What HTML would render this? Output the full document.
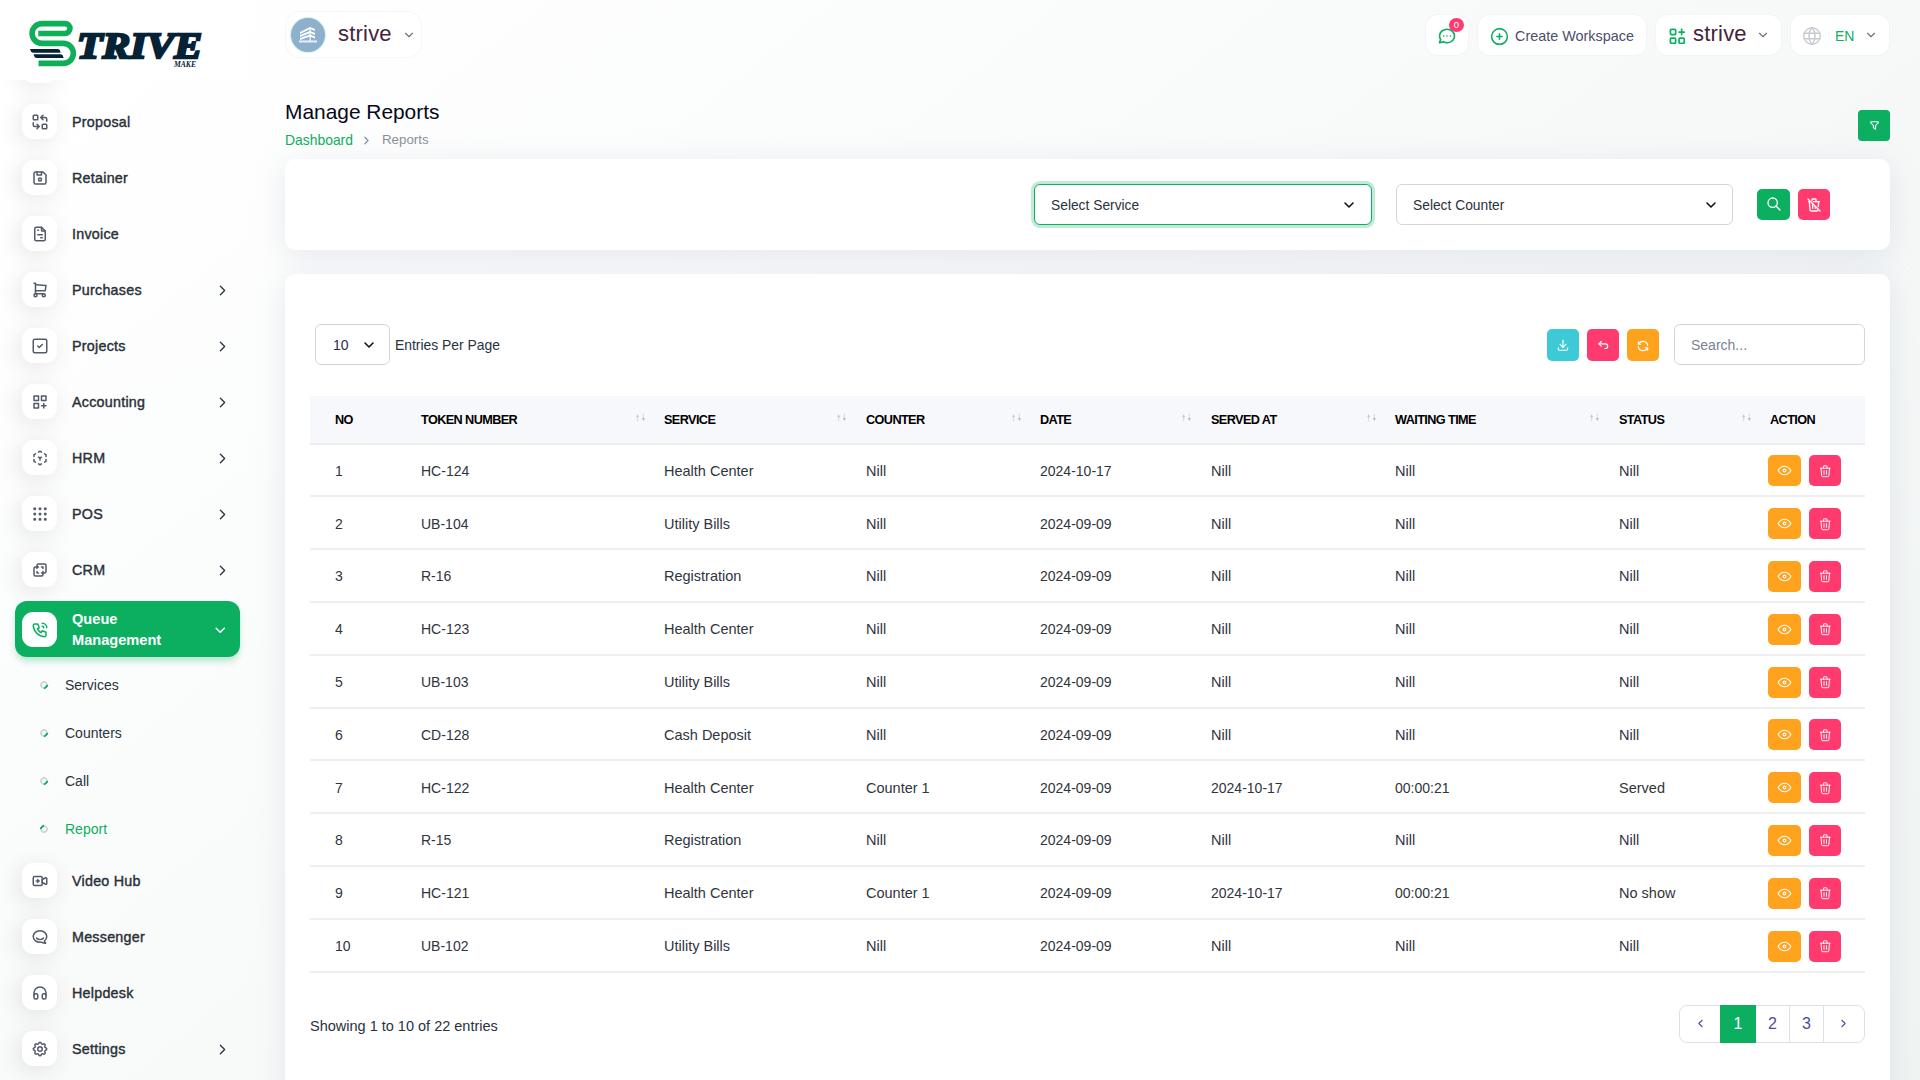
<!DOCTYPE html>
<html><head><meta charset="utf-8">
<style>
*{box-sizing:border-box;margin:0;padding:0}
html,body{width:1920px;height:1080px;overflow:hidden}
body{font-family:"Liberation Sans",sans-serif;color:#293240;position:relative;
background:linear-gradient(141.55deg,#ffffff 3.46%,#f0f4f3 99.86%);}
.abs{position:absolute}
svg.ti{fill:none;stroke:currentColor;stroke-linecap:round;stroke-linejoin:round}
/* sidebar */
#side{position:absolute;left:0;top:0;width:282px;height:1080px;
background:transparent;}
#logoband{position:absolute;left:0;top:0;width:282px;height:80px;background:linear-gradient(90deg,#fff 80%,rgba(255,255,255,0))}
.mi{position:absolute;left:15px;width:225px;height:56px}
.mi .ib{position:absolute;left:7px;top:10.5px;width:35px;height:35px;border-radius:11px;background:#fff;
box-shadow:-3px 4px 23px rgba(0,0,0,0.1);color:#525b69}
.mi .ib svg{position:absolute;left:8.5px;top:9.2px;width:18px;height:18px;stroke-width:2}
.mi .tx{position:absolute;left:57px;top:0;line-height:56px;font-size:14.3px;font-weight:normal;color:#2a3038;-webkit-text-stroke:0.4px #2a3038;letter-spacing:0.25px}
.mi .chev{position:absolute;left:198.5px;top:20.5px;width:17px;height:17px;color:#293240}
.mi.active{background:#0caf60;border-radius:12px;box-shadow:0 5px 7px -1px rgba(12,175,96,0.3)}
.mi.active .ib{box-shadow:none;color:#0caf60}
.mi.active .tx{color:#fff;line-height:21px;top:7.5px;font-size:14.6px;letter-spacing:0;font-weight:bold;-webkit-text-stroke:0}
.sub{position:absolute;left:65px;font-size:14px;color:#293240;line-height:20px}
.ring{position:absolute;left:40px;width:8px;height:8px;border-radius:50%;border:2px solid #d3d6df;transform:rotate(-45deg)}
/* top */
.tbox{position:absolute;top:15px;height:40px;background:#fff;border-radius:12px;box-shadow:0 0 0 1px rgba(240,240,243,0.6)}
/* cards */
.card{position:absolute;background:#fff;border-radius:10px;box-shadow:0 6px 30px rgba(182,186,203,0.3)}
.btn{position:absolute;border-radius:5px;color:#fff}
.btn svg{position:absolute;stroke-width:2}
.sel{position:absolute;height:41px;border:1px solid #d1d5dc;border-radius:6px;background:#fff;font-size:14px;color:#293240}
/* table */
.th{position:absolute;top:396px;font-size:12.7px;font-weight:bold;color:#000;line-height:48px;letter-spacing:-0.6px}
.srt{position:absolute;width:11px;height:9px}
.row{position:absolute;left:310px;width:1555px;border-bottom:2px solid #efefef}
.td{position:absolute;font-size:14.5px;color:#2f353d;top:0}
.ab{position:absolute;width:33px;height:31px;border-radius:5px}
</style></head><body>

<!-- SIDEBAR -->
<div id="side"></div>
<div class="mi" style="top:37.5px"><div class="ib"></div></div>
<div class="mi" style="top:93.5px"><div class="ib"><svg class="ti" viewBox="0 0 24 24" ><path d="M3 3m0 1a1 1 0 0 1 1 -1h4a1 1 0 0 1 1 1v4a1 1 0 0 1 -1 1h-4a1 1 0 0 1 -1 -1z"/><path d="M15 15m0 1a1 1 0 0 1 1 -1h4a1 1 0 0 1 1 1v4a1 1 0 0 1 -1 1h-4a1 1 0 0 1 -1 -1z"/><path d="M21 11v-3a2 2 0 0 0 -2 -2h-6l3 3m0 -6l-3 3"/><path d="M3 13v3a2 2 0 0 0 2 2h6l-3 -3m0 6l3 -3"/></svg></div><div class="tx">Proposal</div></div>
<div class="mi" style="top:149.5px"><div class="ib"><svg class="ti" viewBox="0 0 24 24" ><path d="M6 4h10l4 4v10a2 2 0 0 1 -2 2h-12a2 2 0 0 1 -2 -2v-12a2 2 0 0 1 2 -2"/><path d="M12 14m-2 0a2 2 0 1 0 4 0a2 2 0 1 0 -4 0"/><path d="M14 4l0 4l-6 0l0 -4"/></svg></div><div class="tx">Retainer</div></div>
<div class="mi" style="top:205.5px"><div class="ib"><svg class="ti" viewBox="0 0 24 24" ><path d="M14 3v4a1 1 0 0 0 1 1h4"/><path d="M17 21h-10a2 2 0 0 1 -2 -2v-14a2 2 0 0 1 2 -2h7l5 5v11a2 2 0 0 1 -2 2z"/><path d="M9 7l1 0"/><path d="M9 13l6 0"/><path d="M13 17l2 0"/></svg></div><div class="tx">Invoice</div></div>
<div class="mi" style="top:261.5px"><div class="ib"><svg class="ti" viewBox="0 0 24 24" ><path d="M6 19m-2 0a2 2 0 1 0 4 0a2 2 0 1 0 -4 0"/><path d="M17 19m-2 0a2 2 0 1 0 4 0a2 2 0 1 0 -4 0"/><path d="M17 17h-11v-14h-2"/><path d="M6 5l14 1l-1 7h-13"/></svg></div><div class="tx">Purchases</div><svg class="chev ti" viewBox="0 0 24 24" stroke-width="1.8"><path d="M9 6l6 6l-6 6"/></svg></div>
<div class="mi" style="top:317.5px"><div class="ib"><svg class="ti" viewBox="0 0 24 24" ><path d="M3 5a2 2 0 0 1 2 -2h14a2 2 0 0 1 2 2v14a2 2 0 0 1 -2 2h-14a2 2 0 0 1 -2 -2v-14z"/><path d="M9 12l2 2l4 -4"/></svg></div><div class="tx">Projects</div><svg class="chev ti" viewBox="0 0 24 24" stroke-width="1.8"><path d="M9 6l6 6l-6 6"/></svg></div>
<div class="mi" style="top:373.5px"><div class="ib"><svg class="ti" viewBox="0 0 24 24" ><path d="M4 4h6v6h-6z"/><path d="M14 4h6v6h-6z"/><path d="M4 14h6v6h-6z"/><path d="M14 17h6m-3 -3v6"/></svg></div><div class="tx">Accounting</div><svg class="chev ti" viewBox="0 0 24 24" stroke-width="1.8"><path d="M9 6l6 6l-6 6"/></svg></div>
<div class="mi" style="top:429.5px"><div class="ib"><svg class="ti" viewBox="0 0 24 24" ><path d="M6 17.6l-2 -1.1v-2.5"/><path d="M4 10v-2.5l2 -1.1"/><path d="M10 4.1l2 -1.1l2 1.1"/><path d="M18 6.4l2 1.1v2.5"/><path d="M20 14v2.5l-2 1.12"/><path d="M14 19.9l-2 1.1l-2 -1.1"/><path d="M12 12l2 -1.1"/><path d="M12 12l0 2.5"/><path d="M12 12l-2 -1.12"/></svg></div><div class="tx">HRM</div><svg class="chev ti" viewBox="0 0 24 24" stroke-width="1.8"><path d="M9 6l6 6l-6 6"/></svg></div>
<div class="mi" style="top:485.5px"><div class="ib"><svg class="ti" viewBox="0 0 24 24" ><path d="M5 5m-1 0a1 1 0 1 0 2 0a1 1 0 1 0 -2 0"/><path d="M12 5m-1 0a1 1 0 1 0 2 0a1 1 0 1 0 -2 0"/><path d="M19 5m-1 0a1 1 0 1 0 2 0a1 1 0 1 0 -2 0"/><path d="M5 12m-1 0a1 1 0 1 0 2 0a1 1 0 1 0 -2 0"/><path d="M12 12m-1 0a1 1 0 1 0 2 0a1 1 0 1 0 -2 0"/><path d="M19 12m-1 0a1 1 0 1 0 2 0a1 1 0 1 0 -2 0"/><path d="M5 19m-1 0a1 1 0 1 0 2 0a1 1 0 1 0 -2 0"/><path d="M12 19m-1 0a1 1 0 1 0 2 0a1 1 0 1 0 -2 0"/><path d="M19 19m-1 0a1 1 0 1 0 2 0a1 1 0 1 0 -2 0"/></svg></div><div class="tx">POS</div><svg class="chev ti" viewBox="0 0 24 24" stroke-width="1.8"><path d="M9 6l6 6l-6 6"/></svg></div>
<div class="mi" style="top:541.5px"><div class="ib"><svg class="ti" viewBox="0 0 24 24" ><path d="M16 16v2a2 2 0 0 1 -2 2h-8a2 2 0 0 1 -2 -2v-8a2 2 0 0 1 2 -2h2v-2a2 2 0 0 1 2 -2h8a2 2 0 0 1 2 2v8a2 2 0 0 1 -2 2h-2"/><path d="M10 8l-2 0l0 2"/><path d="M8 14l0 2l2 0"/><path d="M14 8l2 0l0 2"/><path d="M16 14l0 2l-2 0"/></svg></div><div class="tx">CRM</div><svg class="chev ti" viewBox="0 0 24 24" stroke-width="1.8"><path d="M9 6l6 6l-6 6"/></svg></div>
<div class="mi active" style="top:601px"><div class="ib"><svg class="ti" viewBox="0 0 24 24" ><path d="M5 4h4l2 5l-2.5 1.5a11 11 0 0 0 5 5l1.5 -2.5l5 2v4a2 2 0 0 1 -2 2a16 16 0 0 1 -15 -15a2 2 0 0 1 2 -2"/><path d="M15 7a2 2 0 0 1 2 2"/><path d="M15 3a6 6 0 0 1 6 6"/></svg></div><div class="tx">Queue<br>Management</div><svg class="chev ti" viewBox="0 0 24 24" stroke-width="2.2" style="color:#fff;left:197px;top:20.5px;width:16.5px;height:16.5px"><path d="M6 9l6 6l6 -6"/></svg></div>
<div class="ring" style="top:680.5px;border-color:#d3d6df #d3d6df #0caf60 #d3d6df"></div><div class="sub" style="top:674.5px;color:#293240">Services</div>
<div class="ring" style="top:728.5px;border-color:#d3d6df #d3d6df #0caf60 #d3d6df"></div><div class="sub" style="top:722.5px;color:#293240">Counters</div>
<div class="ring" style="top:776.5px;border-color:#d3d6df #d3d6df #0caf60 #d3d6df"></div><div class="sub" style="top:770.5px;color:#293240">Call</div>
<div class="ring" style="top:824.5px;border-color:#0caf60 #d3d6df #d3d6df #d3d6df"></div><div class="sub" style="top:818.5px;color:#0caf60">Report</div>
<div class="mi" style="top:852.5px"><div class="ib"><svg class="ti" viewBox="0 0 24 24" ><path d="M15 10l4.553 -2.276a1 1 0 0 1 1.447 .894v6.764a1 1 0 0 1 -1.447 .894l-4.553 -2.276v-4z"/><path d="M3 6m0 2a2 2 0 0 1 2 -2h8a2 2 0 0 1 2 2v8a2 2 0 0 1 -2 2h-8a2 2 0 0 1 -2 -2z"/><path d="M7 12l4 0"/><path d="M9 10l0 4"/></svg></div><div class="tx">Video Hub</div></div>
<div class="mi" style="top:908.5px"><div class="ib"><svg class="ti" viewBox="0 0 24 24" ><path d="M17.802 17.292s.077 -.055 .2 -.149c1.843 -1.425 3 -3.49 3 -5.789c0 -4.286 -4.03 -7.764 -9 -7.764c-4.97 0 -9 3.478 -9 7.764c0 4.288 4.03 7.646 9 7.646c.424 0 1.12 -.028 2.088 -.084c1.262 .82 3.104 1.493 4.716 1.493c.499 0 .734 -.41 .414 -.828c-.486 -.596 -1.156 -1.551 -1.416 -2.29z"/><path d="M7.5 13.5c2.5 2.5 6.5 2.5 9 0"/></svg></div><div class="tx">Messenger</div></div>
<div class="mi" style="top:964.5px"><div class="ib"><svg class="ti" viewBox="0 0 24 24" ><path d="M4 13m0 2a2 2 0 0 1 2 -2h1a2 2 0 0 1 2 2v3a2 2 0 0 1 -2 2h-1a2 2 0 0 1 -2 -2z"/><path d="M15 13m0 2a2 2 0 0 1 2 -2h1a2 2 0 0 1 2 2v3a2 2 0 0 1 -2 2h-1a2 2 0 0 1 -2 -2z"/><path d="M4 15v-3a8 8 0 0 1 16 0v3"/></svg></div><div class="tx">Helpdesk</div></div>
<div class="mi" style="top:1020.5px"><div class="ib"><svg class="ti" viewBox="0 0 24 24" ><path d="M10.325 4.317c.426 -1.756 2.924 -1.756 3.35 0a1.724 1.724 0 0 0 2.573 1.066c1.543 -.94 3.31 .826 2.37 2.37a1.724 1.724 0 0 0 1.065 2.572c1.756 .426 1.756 2.924 0 3.35a1.724 1.724 0 0 0 -1.066 2.573c.94 1.543 -.826 3.31 -2.37 2.37a1.724 1.724 0 0 0 -2.572 1.065c-.426 1.756 -2.924 1.756 -3.35 0a1.724 1.724 0 0 0 -2.573 -1.066c-1.543 .94 -3.31 -.826 -2.37 -2.37a1.724 1.724 0 0 0 -1.065 -2.572c-1.756 -.426 -1.756 -2.924 0 -3.35a1.724 1.724 0 0 0 1.066 -2.573c-.94 -1.543 .826 -3.31 2.37 -2.37c1 .608 2.296 .07 2.572 -1.065z"/><path d="M9 12a3 3 0 1 0 6 0a3 3 0 0 0 -6 0"/></svg></div><div class="tx">Settings</div><svg class="chev ti" viewBox="0 0 24 24" stroke-width="1.8"><path d="M9 6l6 6l-6 6"/></svg></div>
<div id="logoband"></div>
<svg class="abs" style="left:20px;top:10px" width="190" height="62" viewBox="20 10 190 62">
  <path d="M38.3,33.5 H65 A4.9,4.9 0 0 0 65,23.6 H42 A9.9,9.9 0 0 0 42,43.4 H63.3 A10,10 0 0 1 63.3,63.4 H38.5" fill="none" stroke="#0faf5a" stroke-width="5.6" stroke-linecap="butt"/>
  <path d="M30,48.9 H58 Q60.5,49.5 60.5,52.8 H33 Q30.5,52 30,48.9 Z" fill="#062236"/>
  <path d="M33.6,54.2 H61 Q63.5,55 63.5,58 H36.6 Q34,57.5 33.6,54.2 Z" fill="#062236"/>
  <text x="77" y="58.2" font-family="Liberation Serif" font-weight="bold" font-style="italic" font-size="36" textLength="125" lengthAdjust="spacingAndGlyphs" fill="#062236" stroke="#062236" stroke-width="2.3">TRIVE</text>
  <text x="174" y="67" font-family="Liberation Serif" font-weight="bold" font-style="italic" font-size="7.5" textLength="22" lengthAdjust="spacingAndGlyphs" fill="#062236">MAKE</text>
</svg>



<!-- TOP BAR -->
<div class="tbox" style="left:286px;top:12px;width:135px;height:45px;border-radius:14px"></div>
<div class="abs" style="left:291px;top:18px;width:34px;height:34px;border-radius:50%;background:#8db0cc;box-shadow:0 0 0 1px #d5f1e2"></div>
<svg class="abs" style="left:297px;top:24px" width="22" height="20" viewBox="0 0 22 20">
 <path d="M3,8 L13,3 L18,5 L18,7 L13,5 L3,10Z M3,11 L13,7 L18,9 L18,11 L13,9 L3,13Z M3,14 L13,10.5 L18,12.5 L18,14.5 L13,12.5 L3,16Z" fill="#fff"/>
 <rect x="12.5" y="4" width="1.2" height="13" fill="#fff"/>
 <rect x="2" y="16.5" width="18" height="2" fill="#fff" opacity="0.8"/>
</svg>
<div class="abs" style="left:338px;top:20px;font-size:22px;line-height:28px;color:#45243a;letter-spacing:0.2px">strive</div>
<svg class="abs ti" style="left:402px;top:28px;color:#6b7280" width="14" height="14" viewBox="0 0 24 24" stroke-width="2"><path d="M6 9l6 6l6 -6"/></svg>

<div class="tbox" style="left:1426px;width:42px"></div>
<svg class="abs ti" style="left:1437px;top:26px;color:#0caf60" width="20" height="20" viewBox="0 0 24 24" stroke-width="2"><path d="M3 20l1.3 -3.9c-2.324 -3.437 -1.426 -7.872 2.1 -10.374c3.526 -2.501 8.59 -2.296 11.845 .48c3.255 2.777 3.695 7.266 1.029 10.501c-2.666 3.235 -7.615 4.215 -11.574 2.293l-4.7 1"/><path d="M12 12l0 .01"/><path d="M8 12l0 .01"/><path d="M16 12l0 .01"/></svg>
<div class="abs" style="left:1449px;top:18px;width:15px;height:14px;border-radius:50%;background:#ff3a6e;color:#fff;font-size:9.5px;line-height:14px;text-align:center">0</div>

<div class="tbox" style="left:1478px;width:168px"></div>
<svg class="abs ti" style="left:1488.5px;top:25.5px;color:#0caf60" width="21" height="21" viewBox="0 0 24 24" stroke-width="1.8"><path d="M3 12a9 9 0 1 0 18 0a9 9 0 0 0 -18 0"/><path d="M9 12h6"/><path d="M12 9v6"/></svg>
<div class="abs" style="left:1515px;top:26px;font-size:14.4px;line-height:20px;color:#4b4f6a">Create Workspace</div>

<div class="tbox" style="left:1656px;width:125px"></div>
<svg class="abs ti" style="left:1667px;top:25.65px;color:#0caf60" width="20.7" height="20.7" viewBox="0 0 24 24" stroke-width="2"><path d="M4 4m0 1a1 1 0 0 1 1 -1h4a1 1 0 0 1 1 1v4a1 1 0 0 1 -1 1h-4a1 1 0 0 1 -1 -1z"/><path d="M4 14m0 1a1 1 0 0 1 1 -1h4a1 1 0 0 1 1 1v4a1 1 0 0 1 -1 1h-4a1 1 0 0 1 -1 -1z"/><path d="M14 14m0 1a1 1 0 0 1 1 -1h4a1 1 0 0 1 1 1v4a1 1 0 0 1 -1 1h-4a1 1 0 0 1 -1 -1z"/><path d="M14 7l6 0"/><path d="M17 4l0 6"/></svg>
<div class="abs" style="left:1693px;top:20px;font-size:22px;line-height:28px;color:#45243a;letter-spacing:0.2px">strive</div>
<svg class="abs ti" style="left:1756px;top:28px;color:#6b7280" width="14" height="14" viewBox="0 0 24 24" stroke-width="2"><path d="M6 9l6 6l6 -6"/></svg>

<div class="tbox" style="left:1791px;width:98px"></div>
<svg class="abs ti" style="left:1801px;top:25px;color:#c9ccd3" width="22" height="22" viewBox="0 0 24 24" stroke-width="1.6"><path d="M3 12a9 9 0 1 0 18 0a9 9 0 0 0 -18 0"/><path d="M3.6 9h16.8"/><path d="M3.6 15h16.8"/><path d="M11.5 3a17 17 0 0 0 0 18"/><path d="M12.5 3a17 17 0 0 1 0 18"/></svg>
<div class="abs" style="left:1835px;top:26px;font-size:14px;line-height:20px;color:#0caf60">EN</div>
<svg class="abs ti" style="left:1864px;top:28px;color:#6b7280" width="14" height="14" viewBox="0 0 24 24" stroke-width="2"><path d="M6 9l6 6l6 -6"/></svg>

<!-- HEADER -->
<div class="abs" style="left:285px;top:98.5px;font-size:20.9px;line-height:26px;color:#060818">Manage Reports</div>
<div class="abs" style="left:285px;top:132px;font-size:13.9px;line-height:16px;color:#0caf60">Dashboard</div>
<svg class="abs ti" style="left:359.5px;top:133.5px;color:#8a909a" width="13" height="13" viewBox="0 0 24 24" stroke-width="2.2"><path d="M9 6l6 6l-6 6"/></svg>
<div class="abs" style="left:382px;top:132px;font-size:13.3px;line-height:16px;color:#8a909a">Reports</div>
<div class="btn" style="left:1858px;top:110px;width:32px;height:31px;background:#0caf60;border-radius:4px">
 <svg class="ti" style="left:9.5px;top:8.7px" width="13" height="13" viewBox="0 0 24 24" stroke-width="2"><path d="M5.5 5h13a1 1 0 0 1 .5 1.5l-5 5.5l0 7l-4 -3l0 -4l-5 -5.5a1 1 0 0 1 .5 -1.5"/></svg>
</div>

<!-- FILTER CARD -->
<div class="card" style="left:285px;top:159px;width:1605px;height:91px"></div>
<div class="sel" style="left:1034px;top:184px;width:338px;border-color:#0caf60;box-shadow:0 0 0 3px rgba(12,175,96,0.25)">
 <div class="abs" style="left:16px;top:11px;line-height:20px;font-size:13.8px">Select Service</div>
 <svg class="abs ti" style="left:306px;top:12px;color:#111" width="16" height="16" viewBox="0 0 24 24" stroke-width="2.4"><path d="M6 9l6 6l6 -6"/></svg>
</div>
<div class="sel" style="left:1396px;top:184px;width:337px">
 <div class="abs" style="left:16px;top:11px;line-height:20px;font-size:13.8px">Select Counter</div>
 <svg class="abs ti" style="left:306px;top:12px;color:#111" width="16" height="16" viewBox="0 0 24 24" stroke-width="2.4"><path d="M6 9l6 6l6 -6"/></svg>
</div>
<div class="btn" style="left:1757px;top:189px;width:33px;height:31px;background:#0caf60">
 <svg class="ti" style="left:8.5px;top:7.4px" width="16" height="16" viewBox="0 0 24 24" stroke-width="1.6"><path d="M10 10m-7 0a7 7 0 1 0 14 0a7 7 0 1 0 -14 0"/><path d="M21 21l-6 -6"/></svg>
</div>
<div class="btn" style="left:1798px;top:189px;width:32px;height:31px;background:#ff3a6e">
 <svg class="ti" style="left:7.5px;top:7.5px" width="16" height="16" viewBox="0 0 24 24" stroke-width="1.6"><path d="M3 3l18 18"/><path d="M4 7h3m4 0h9"/><path d="M10 11l0 6"/><path d="M14 14l0 3"/><path d="M5 7l1 12a2 2 0 0 0 2 2h8a2 2 0 0 0 2 -2l.077 -.923"/><path d="M18.384 14.373l.616 -7.373"/><path d="M9 5v-1a1 1 0 0 1 1 -1h4a1 1 0 0 1 1 1v3"/></svg>
</div>

<!-- TABLE CARD -->
<div class="card" style="left:285px;top:274px;width:1605px;height:900px"></div>
<div class="sel" style="left:315px;top:324px;width:75px">
 <div class="abs" style="left:17px;top:10px;line-height:20px;font-size:14px">10</div>
 <svg class="abs ti" style="left:45px;top:12px;color:#111" width="16" height="16" viewBox="0 0 24 24" stroke-width="2.4"><path d="M6 9l6 6l6 -6"/></svg>
</div>
<div class="abs" style="left:395px;top:335px;font-size:13.9px;line-height:20px;color:#293240">Entries Per Page</div>

<div class="btn" style="left:1547px;top:329px;width:32px;height:32px;background:#3ec9d6">
 <svg class="ti" style="left:8.8px;top:9.3px" width="14" height="14" viewBox="0 0 24 24" stroke-width="1.6"><path d="M4 17v2a2 2 0 0 0 2 2h12a2 2 0 0 0 2 -2v-2"/><path d="M7 11l5 5l5 -5"/><path d="M12 4l0 12"/></svg>
</div>
<div class="btn" style="left:1587px;top:329px;width:32px;height:32px;background:#ff3a6e">
 <svg class="ti" style="left:8.7px;top:8.85px" width="14" height="14" viewBox="0 0 24 24" stroke-width="1.6"><path d="M9 14l-4 -4l4 -4"/><path d="M5 10h11a4 4 0 1 1 0 8h-1"/></svg>
</div>
<div class="btn" style="left:1627px;top:329px;width:32px;height:32px;background:#ffa21d">
 <svg class="ti" style="left:8.5px;top:9.6px" width="14" height="14" viewBox="0 0 24 24" stroke-width="1.6"><path d="M20 11a8.1 8.1 0 0 0 -15.5 -2m-.5 -4v4h4"/><path d="M4 13a8.1 8.1 0 0 0 15.5 2m.5 4v-4h-4"/></svg>
</div>
<div class="sel" style="left:1674px;top:324px;width:191px">
 <div class="abs" style="left:16px;top:10px;line-height:20px;font-size:14px;color:#7b8291">Search...</div>
</div>

<div class="abs" style="left:310px;top:396px;width:1555px;height:49px;background:#f7f8fb;border-bottom:2px solid #efefef"></div>
<div class="th" style="left:335px">NO</div>
<div class="th" style="left:421px">TOKEN NUMBER</div>
<div class="abs" style="left:634.5px;top:413.2px;line-height:0"><svg class="srt" viewBox="0 0 11 9" style="width:11px;height:9px"><path d="M2.6 8.2V3" stroke="#d3d5da" stroke-width="0.9"/><path d="M1.1 4.2L2.6 1.2L4.1 4.2Z" fill="#c2c5cb"/><path d="M8.4 0.9V6" stroke="#d3d5da" stroke-width="0.9"/><path d="M6.9 5L8.4 8L9.9 5Z" fill="#b5b8bf"/></svg></div>
<div class="th" style="left:664px">SERVICE</div>
<div class="abs" style="left:835.5px;top:413.2px;line-height:0"><svg class="srt" viewBox="0 0 11 9" style="width:11px;height:9px"><path d="M2.6 8.2V3" stroke="#d3d5da" stroke-width="0.9"/><path d="M1.1 4.2L2.6 1.2L4.1 4.2Z" fill="#c2c5cb"/><path d="M8.4 0.9V6" stroke="#d3d5da" stroke-width="0.9"/><path d="M6.9 5L8.4 8L9.9 5Z" fill="#b5b8bf"/></svg></div>
<div class="th" style="left:866px">COUNTER</div>
<div class="abs" style="left:1010.5px;top:413.2px;line-height:0"><svg class="srt" viewBox="0 0 11 9" style="width:11px;height:9px"><path d="M2.6 8.2V3" stroke="#d3d5da" stroke-width="0.9"/><path d="M1.1 4.2L2.6 1.2L4.1 4.2Z" fill="#c2c5cb"/><path d="M8.4 0.9V6" stroke="#d3d5da" stroke-width="0.9"/><path d="M6.9 5L8.4 8L9.9 5Z" fill="#b5b8bf"/></svg></div>
<div class="th" style="left:1040px">DATE</div>
<div class="abs" style="left:1180.5px;top:413.2px;line-height:0"><svg class="srt" viewBox="0 0 11 9" style="width:11px;height:9px"><path d="M2.6 8.2V3" stroke="#d3d5da" stroke-width="0.9"/><path d="M1.1 4.2L2.6 1.2L4.1 4.2Z" fill="#c2c5cb"/><path d="M8.4 0.9V6" stroke="#d3d5da" stroke-width="0.9"/><path d="M6.9 5L8.4 8L9.9 5Z" fill="#b5b8bf"/></svg></div>
<div class="th" style="left:1211px">SERVED AT</div>
<div class="abs" style="left:1365.5px;top:413.2px;line-height:0"><svg class="srt" viewBox="0 0 11 9" style="width:11px;height:9px"><path d="M2.6 8.2V3" stroke="#d3d5da" stroke-width="0.9"/><path d="M1.1 4.2L2.6 1.2L4.1 4.2Z" fill="#c2c5cb"/><path d="M8.4 0.9V6" stroke="#d3d5da" stroke-width="0.9"/><path d="M6.9 5L8.4 8L9.9 5Z" fill="#b5b8bf"/></svg></div>
<div class="th" style="left:1395px">WAITING TIME</div>
<div class="abs" style="left:1588.5px;top:413.2px;line-height:0"><svg class="srt" viewBox="0 0 11 9" style="width:11px;height:9px"><path d="M2.6 8.2V3" stroke="#d3d5da" stroke-width="0.9"/><path d="M1.1 4.2L2.6 1.2L4.1 4.2Z" fill="#c2c5cb"/><path d="M8.4 0.9V6" stroke="#d3d5da" stroke-width="0.9"/><path d="M6.9 5L8.4 8L9.9 5Z" fill="#b5b8bf"/></svg></div>
<div class="th" style="left:1619px">STATUS</div>
<div class="abs" style="left:1740.5px;top:413.2px;line-height:0"><svg class="srt" viewBox="0 0 11 9" style="width:11px;height:9px"><path d="M2.6 8.2V3" stroke="#d3d5da" stroke-width="0.9"/><path d="M1.1 4.2L2.6 1.2L4.1 4.2Z" fill="#c2c5cb"/><path d="M8.4 0.9V6" stroke="#d3d5da" stroke-width="0.9"/><path d="M6.9 5L8.4 8L9.9 5Z" fill="#b5b8bf"/></svg></div>
<div class="th" style="left:1770px">ACTION</div>
<div class="row" style="top:444.70px;height:52.80px"></div>
<div class="td" style="left:335px;top:460.70px;line-height:20px;font-size:14px">1</div>
<div class="td" style="left:421px;top:460.70px;line-height:20px;font-size:14px">HC-124</div>
<div class="td" style="left:664px;top:460.70px;line-height:20px;font-size:14.5px">Health Center</div>
<div class="td" style="left:866px;top:460.70px;line-height:20px;font-size:14.5px">Nill</div>
<div class="td" style="left:1040px;top:460.70px;line-height:20px;font-size:14px">2024-10-17</div>
<div class="td" style="left:1211px;top:460.70px;line-height:20px;font-size:14.5px">Nill</div>
<div class="td" style="left:1395px;top:460.70px;line-height:20px;font-size:14.5px">Nill</div>
<div class="td" style="left:1619px;top:460.70px;line-height:20px;font-size:14.5px">Nill</div>
<div class="ab" style="left:1768px;top:455.45px;background:#ffa21d"><svg class="ti abs" style="left:8px;top:7px;color:#fff" width="17" height="17" viewBox="0 0 24 24" stroke-width="1.6"><path d="M10 12a2 2 0 1 0 4 0a2 2 0 0 0 -4 0"/><path d="M21 12c-2.4 4 -5.4 6 -9 6c-3.6 0 -6.6 -2 -9 -6c2.4 -4 5.4 -6 9 -6c3.6 0 6.6 2 9 6"/></svg></div>
<div class="ab" style="left:1809px;top:455.45px;width:32px;background:#ff3a6e"><svg class="ti abs" style="left:8.65px;top:8.3px;color:#fff" width="14.5" height="14.5" viewBox="0 0 24 24" stroke-width="1.6"><path d="M4 7l16 0"/><path d="M10 11l0 6"/><path d="M14 11l0 6"/><path d="M5 7l1 12a2 2 0 0 0 2 2h8a2 2 0 0 0 2 -2l1 -12"/><path d="M9 7v-3a1 1 0 0 1 1 -1h4a1 1 0 0 1 1 1v3"/></svg></div>
<div class="row" style="top:497.50px;height:52.80px"></div>
<div class="td" style="left:335px;top:513.50px;line-height:20px;font-size:14px">2</div>
<div class="td" style="left:421px;top:513.50px;line-height:20px;font-size:14px">UB-104</div>
<div class="td" style="left:664px;top:513.50px;line-height:20px;font-size:14.5px">Utility Bills</div>
<div class="td" style="left:866px;top:513.50px;line-height:20px;font-size:14.5px">Nill</div>
<div class="td" style="left:1040px;top:513.50px;line-height:20px;font-size:14px">2024-09-09</div>
<div class="td" style="left:1211px;top:513.50px;line-height:20px;font-size:14.5px">Nill</div>
<div class="td" style="left:1395px;top:513.50px;line-height:20px;font-size:14.5px">Nill</div>
<div class="td" style="left:1619px;top:513.50px;line-height:20px;font-size:14.5px">Nill</div>
<div class="ab" style="left:1768px;top:508.25px;background:#ffa21d"><svg class="ti abs" style="left:8px;top:7px;color:#fff" width="17" height="17" viewBox="0 0 24 24" stroke-width="1.6"><path d="M10 12a2 2 0 1 0 4 0a2 2 0 0 0 -4 0"/><path d="M21 12c-2.4 4 -5.4 6 -9 6c-3.6 0 -6.6 -2 -9 -6c2.4 -4 5.4 -6 9 -6c3.6 0 6.6 2 9 6"/></svg></div>
<div class="ab" style="left:1809px;top:508.25px;width:32px;background:#ff3a6e"><svg class="ti abs" style="left:8.65px;top:8.3px;color:#fff" width="14.5" height="14.5" viewBox="0 0 24 24" stroke-width="1.6"><path d="M4 7l16 0"/><path d="M10 11l0 6"/><path d="M14 11l0 6"/><path d="M5 7l1 12a2 2 0 0 0 2 2h8a2 2 0 0 0 2 -2l1 -12"/><path d="M9 7v-3a1 1 0 0 1 1 -1h4a1 1 0 0 1 1 1v3"/></svg></div>
<div class="row" style="top:550.30px;height:52.80px"></div>
<div class="td" style="left:335px;top:566.30px;line-height:20px;font-size:14px">3</div>
<div class="td" style="left:421px;top:566.30px;line-height:20px;font-size:14px">R-16</div>
<div class="td" style="left:664px;top:566.30px;line-height:20px;font-size:14.5px">Registration</div>
<div class="td" style="left:866px;top:566.30px;line-height:20px;font-size:14.5px">Nill</div>
<div class="td" style="left:1040px;top:566.30px;line-height:20px;font-size:14px">2024-09-09</div>
<div class="td" style="left:1211px;top:566.30px;line-height:20px;font-size:14.5px">Nill</div>
<div class="td" style="left:1395px;top:566.30px;line-height:20px;font-size:14.5px">Nill</div>
<div class="td" style="left:1619px;top:566.30px;line-height:20px;font-size:14.5px">Nill</div>
<div class="ab" style="left:1768px;top:561.05px;background:#ffa21d"><svg class="ti abs" style="left:8px;top:7px;color:#fff" width="17" height="17" viewBox="0 0 24 24" stroke-width="1.6"><path d="M10 12a2 2 0 1 0 4 0a2 2 0 0 0 -4 0"/><path d="M21 12c-2.4 4 -5.4 6 -9 6c-3.6 0 -6.6 -2 -9 -6c2.4 -4 5.4 -6 9 -6c3.6 0 6.6 2 9 6"/></svg></div>
<div class="ab" style="left:1809px;top:561.05px;width:32px;background:#ff3a6e"><svg class="ti abs" style="left:8.65px;top:8.3px;color:#fff" width="14.5" height="14.5" viewBox="0 0 24 24" stroke-width="1.6"><path d="M4 7l16 0"/><path d="M10 11l0 6"/><path d="M14 11l0 6"/><path d="M5 7l1 12a2 2 0 0 0 2 2h8a2 2 0 0 0 2 -2l1 -12"/><path d="M9 7v-3a1 1 0 0 1 1 -1h4a1 1 0 0 1 1 1v3"/></svg></div>
<div class="row" style="top:603.10px;height:52.80px"></div>
<div class="td" style="left:335px;top:619.10px;line-height:20px;font-size:14px">4</div>
<div class="td" style="left:421px;top:619.10px;line-height:20px;font-size:14px">HC-123</div>
<div class="td" style="left:664px;top:619.10px;line-height:20px;font-size:14.5px">Health Center</div>
<div class="td" style="left:866px;top:619.10px;line-height:20px;font-size:14.5px">Nill</div>
<div class="td" style="left:1040px;top:619.10px;line-height:20px;font-size:14px">2024-09-09</div>
<div class="td" style="left:1211px;top:619.10px;line-height:20px;font-size:14.5px">Nill</div>
<div class="td" style="left:1395px;top:619.10px;line-height:20px;font-size:14.5px">Nill</div>
<div class="td" style="left:1619px;top:619.10px;line-height:20px;font-size:14.5px">Nill</div>
<div class="ab" style="left:1768px;top:613.85px;background:#ffa21d"><svg class="ti abs" style="left:8px;top:7px;color:#fff" width="17" height="17" viewBox="0 0 24 24" stroke-width="1.6"><path d="M10 12a2 2 0 1 0 4 0a2 2 0 0 0 -4 0"/><path d="M21 12c-2.4 4 -5.4 6 -9 6c-3.6 0 -6.6 -2 -9 -6c2.4 -4 5.4 -6 9 -6c3.6 0 6.6 2 9 6"/></svg></div>
<div class="ab" style="left:1809px;top:613.85px;width:32px;background:#ff3a6e"><svg class="ti abs" style="left:8.65px;top:8.3px;color:#fff" width="14.5" height="14.5" viewBox="0 0 24 24" stroke-width="1.6"><path d="M4 7l16 0"/><path d="M10 11l0 6"/><path d="M14 11l0 6"/><path d="M5 7l1 12a2 2 0 0 0 2 2h8a2 2 0 0 0 2 -2l1 -12"/><path d="M9 7v-3a1 1 0 0 1 1 -1h4a1 1 0 0 1 1 1v3"/></svg></div>
<div class="row" style="top:655.90px;height:52.80px"></div>
<div class="td" style="left:335px;top:671.90px;line-height:20px;font-size:14px">5</div>
<div class="td" style="left:421px;top:671.90px;line-height:20px;font-size:14px">UB-103</div>
<div class="td" style="left:664px;top:671.90px;line-height:20px;font-size:14.5px">Utility Bills</div>
<div class="td" style="left:866px;top:671.90px;line-height:20px;font-size:14.5px">Nill</div>
<div class="td" style="left:1040px;top:671.90px;line-height:20px;font-size:14px">2024-09-09</div>
<div class="td" style="left:1211px;top:671.90px;line-height:20px;font-size:14.5px">Nill</div>
<div class="td" style="left:1395px;top:671.90px;line-height:20px;font-size:14.5px">Nill</div>
<div class="td" style="left:1619px;top:671.90px;line-height:20px;font-size:14.5px">Nill</div>
<div class="ab" style="left:1768px;top:666.65px;background:#ffa21d"><svg class="ti abs" style="left:8px;top:7px;color:#fff" width="17" height="17" viewBox="0 0 24 24" stroke-width="1.6"><path d="M10 12a2 2 0 1 0 4 0a2 2 0 0 0 -4 0"/><path d="M21 12c-2.4 4 -5.4 6 -9 6c-3.6 0 -6.6 -2 -9 -6c2.4 -4 5.4 -6 9 -6c3.6 0 6.6 2 9 6"/></svg></div>
<div class="ab" style="left:1809px;top:666.65px;width:32px;background:#ff3a6e"><svg class="ti abs" style="left:8.65px;top:8.3px;color:#fff" width="14.5" height="14.5" viewBox="0 0 24 24" stroke-width="1.6"><path d="M4 7l16 0"/><path d="M10 11l0 6"/><path d="M14 11l0 6"/><path d="M5 7l1 12a2 2 0 0 0 2 2h8a2 2 0 0 0 2 -2l1 -12"/><path d="M9 7v-3a1 1 0 0 1 1 -1h4a1 1 0 0 1 1 1v3"/></svg></div>
<div class="row" style="top:708.70px;height:52.80px"></div>
<div class="td" style="left:335px;top:724.70px;line-height:20px;font-size:14px">6</div>
<div class="td" style="left:421px;top:724.70px;line-height:20px;font-size:14px">CD-128</div>
<div class="td" style="left:664px;top:724.70px;line-height:20px;font-size:14.5px">Cash Deposit</div>
<div class="td" style="left:866px;top:724.70px;line-height:20px;font-size:14.5px">Nill</div>
<div class="td" style="left:1040px;top:724.70px;line-height:20px;font-size:14px">2024-09-09</div>
<div class="td" style="left:1211px;top:724.70px;line-height:20px;font-size:14.5px">Nill</div>
<div class="td" style="left:1395px;top:724.70px;line-height:20px;font-size:14.5px">Nill</div>
<div class="td" style="left:1619px;top:724.70px;line-height:20px;font-size:14.5px">Nill</div>
<div class="ab" style="left:1768px;top:719.45px;background:#ffa21d"><svg class="ti abs" style="left:8px;top:7px;color:#fff" width="17" height="17" viewBox="0 0 24 24" stroke-width="1.6"><path d="M10 12a2 2 0 1 0 4 0a2 2 0 0 0 -4 0"/><path d="M21 12c-2.4 4 -5.4 6 -9 6c-3.6 0 -6.6 -2 -9 -6c2.4 -4 5.4 -6 9 -6c3.6 0 6.6 2 9 6"/></svg></div>
<div class="ab" style="left:1809px;top:719.45px;width:32px;background:#ff3a6e"><svg class="ti abs" style="left:8.65px;top:8.3px;color:#fff" width="14.5" height="14.5" viewBox="0 0 24 24" stroke-width="1.6"><path d="M4 7l16 0"/><path d="M10 11l0 6"/><path d="M14 11l0 6"/><path d="M5 7l1 12a2 2 0 0 0 2 2h8a2 2 0 0 0 2 -2l1 -12"/><path d="M9 7v-3a1 1 0 0 1 1 -1h4a1 1 0 0 1 1 1v3"/></svg></div>
<div class="row" style="top:761.50px;height:52.80px"></div>
<div class="td" style="left:335px;top:777.50px;line-height:20px;font-size:14px">7</div>
<div class="td" style="left:421px;top:777.50px;line-height:20px;font-size:14px">HC-122</div>
<div class="td" style="left:664px;top:777.50px;line-height:20px;font-size:14.5px">Health Center</div>
<div class="td" style="left:866px;top:777.50px;line-height:20px;font-size:14.5px">Counter 1</div>
<div class="td" style="left:1040px;top:777.50px;line-height:20px;font-size:14px">2024-09-09</div>
<div class="td" style="left:1211px;top:777.50px;line-height:20px;font-size:14px">2024-10-17</div>
<div class="td" style="left:1395px;top:777.50px;line-height:20px;font-size:14px">00:00:21</div>
<div class="td" style="left:1619px;top:777.50px;line-height:20px;font-size:14.5px">Served</div>
<div class="ab" style="left:1768px;top:772.25px;background:#ffa21d"><svg class="ti abs" style="left:8px;top:7px;color:#fff" width="17" height="17" viewBox="0 0 24 24" stroke-width="1.6"><path d="M10 12a2 2 0 1 0 4 0a2 2 0 0 0 -4 0"/><path d="M21 12c-2.4 4 -5.4 6 -9 6c-3.6 0 -6.6 -2 -9 -6c2.4 -4 5.4 -6 9 -6c3.6 0 6.6 2 9 6"/></svg></div>
<div class="ab" style="left:1809px;top:772.25px;width:32px;background:#ff3a6e"><svg class="ti abs" style="left:8.65px;top:8.3px;color:#fff" width="14.5" height="14.5" viewBox="0 0 24 24" stroke-width="1.6"><path d="M4 7l16 0"/><path d="M10 11l0 6"/><path d="M14 11l0 6"/><path d="M5 7l1 12a2 2 0 0 0 2 2h8a2 2 0 0 0 2 -2l1 -12"/><path d="M9 7v-3a1 1 0 0 1 1 -1h4a1 1 0 0 1 1 1v3"/></svg></div>
<div class="row" style="top:814.30px;height:52.80px"></div>
<div class="td" style="left:335px;top:830.30px;line-height:20px;font-size:14px">8</div>
<div class="td" style="left:421px;top:830.30px;line-height:20px;font-size:14px">R-15</div>
<div class="td" style="left:664px;top:830.30px;line-height:20px;font-size:14.5px">Registration</div>
<div class="td" style="left:866px;top:830.30px;line-height:20px;font-size:14.5px">Nill</div>
<div class="td" style="left:1040px;top:830.30px;line-height:20px;font-size:14px">2024-09-09</div>
<div class="td" style="left:1211px;top:830.30px;line-height:20px;font-size:14.5px">Nill</div>
<div class="td" style="left:1395px;top:830.30px;line-height:20px;font-size:14.5px">Nill</div>
<div class="td" style="left:1619px;top:830.30px;line-height:20px;font-size:14.5px">Nill</div>
<div class="ab" style="left:1768px;top:825.05px;background:#ffa21d"><svg class="ti abs" style="left:8px;top:7px;color:#fff" width="17" height="17" viewBox="0 0 24 24" stroke-width="1.6"><path d="M10 12a2 2 0 1 0 4 0a2 2 0 0 0 -4 0"/><path d="M21 12c-2.4 4 -5.4 6 -9 6c-3.6 0 -6.6 -2 -9 -6c2.4 -4 5.4 -6 9 -6c3.6 0 6.6 2 9 6"/></svg></div>
<div class="ab" style="left:1809px;top:825.05px;width:32px;background:#ff3a6e"><svg class="ti abs" style="left:8.65px;top:8.3px;color:#fff" width="14.5" height="14.5" viewBox="0 0 24 24" stroke-width="1.6"><path d="M4 7l16 0"/><path d="M10 11l0 6"/><path d="M14 11l0 6"/><path d="M5 7l1 12a2 2 0 0 0 2 2h8a2 2 0 0 0 2 -2l1 -12"/><path d="M9 7v-3a1 1 0 0 1 1 -1h4a1 1 0 0 1 1 1v3"/></svg></div>
<div class="row" style="top:867.10px;height:52.80px"></div>
<div class="td" style="left:335px;top:883.10px;line-height:20px;font-size:14px">9</div>
<div class="td" style="left:421px;top:883.10px;line-height:20px;font-size:14px">HC-121</div>
<div class="td" style="left:664px;top:883.10px;line-height:20px;font-size:14.5px">Health Center</div>
<div class="td" style="left:866px;top:883.10px;line-height:20px;font-size:14.5px">Counter 1</div>
<div class="td" style="left:1040px;top:883.10px;line-height:20px;font-size:14px">2024-09-09</div>
<div class="td" style="left:1211px;top:883.10px;line-height:20px;font-size:14px">2024-10-17</div>
<div class="td" style="left:1395px;top:883.10px;line-height:20px;font-size:14px">00:00:21</div>
<div class="td" style="left:1619px;top:883.10px;line-height:20px;font-size:14.5px">No show</div>
<div class="ab" style="left:1768px;top:877.85px;background:#ffa21d"><svg class="ti abs" style="left:8px;top:7px;color:#fff" width="17" height="17" viewBox="0 0 24 24" stroke-width="1.6"><path d="M10 12a2 2 0 1 0 4 0a2 2 0 0 0 -4 0"/><path d="M21 12c-2.4 4 -5.4 6 -9 6c-3.6 0 -6.6 -2 -9 -6c2.4 -4 5.4 -6 9 -6c3.6 0 6.6 2 9 6"/></svg></div>
<div class="ab" style="left:1809px;top:877.85px;width:32px;background:#ff3a6e"><svg class="ti abs" style="left:8.65px;top:8.3px;color:#fff" width="14.5" height="14.5" viewBox="0 0 24 24" stroke-width="1.6"><path d="M4 7l16 0"/><path d="M10 11l0 6"/><path d="M14 11l0 6"/><path d="M5 7l1 12a2 2 0 0 0 2 2h8a2 2 0 0 0 2 -2l1 -12"/><path d="M9 7v-3a1 1 0 0 1 1 -1h4a1 1 0 0 1 1 1v3"/></svg></div>
<div class="row" style="top:919.90px;height:52.80px"></div>
<div class="td" style="left:335px;top:935.90px;line-height:20px;font-size:14px">10</div>
<div class="td" style="left:421px;top:935.90px;line-height:20px;font-size:14px">UB-102</div>
<div class="td" style="left:664px;top:935.90px;line-height:20px;font-size:14.5px">Utility Bills</div>
<div class="td" style="left:866px;top:935.90px;line-height:20px;font-size:14.5px">Nill</div>
<div class="td" style="left:1040px;top:935.90px;line-height:20px;font-size:14px">2024-09-09</div>
<div class="td" style="left:1211px;top:935.90px;line-height:20px;font-size:14.5px">Nill</div>
<div class="td" style="left:1395px;top:935.90px;line-height:20px;font-size:14.5px">Nill</div>
<div class="td" style="left:1619px;top:935.90px;line-height:20px;font-size:14.5px">Nill</div>
<div class="ab" style="left:1768px;top:930.65px;background:#ffa21d"><svg class="ti abs" style="left:8px;top:7px;color:#fff" width="17" height="17" viewBox="0 0 24 24" stroke-width="1.6"><path d="M10 12a2 2 0 1 0 4 0a2 2 0 0 0 -4 0"/><path d="M21 12c-2.4 4 -5.4 6 -9 6c-3.6 0 -6.6 -2 -9 -6c2.4 -4 5.4 -6 9 -6c3.6 0 6.6 2 9 6"/></svg></div>
<div class="ab" style="left:1809px;top:930.65px;width:32px;background:#ff3a6e"><svg class="ti abs" style="left:8.65px;top:8.3px;color:#fff" width="14.5" height="14.5" viewBox="0 0 24 24" stroke-width="1.6"><path d="M4 7l16 0"/><path d="M10 11l0 6"/><path d="M14 11l0 6"/><path d="M5 7l1 12a2 2 0 0 0 2 2h8a2 2 0 0 0 2 -2l1 -12"/><path d="M9 7v-3a1 1 0 0 1 1 -1h4a1 1 0 0 1 1 1v3"/></svg></div>

<div class="abs" style="left:310px;top:1016px;font-size:14.5px;line-height:20px;color:#293240">Showing 1 to 10 of 22 entries</div>
<div class="abs" style="left:1679px;top:1005px;width:186px;height:38px;border:1px solid #dde1e7;border-radius:8px;background:#fff"></div>
<div class="abs" style="left:1720px;top:1005px;width:36px;height:38px;background:#0caf60"></div>
<div class="abs" style="left:1789px;top:1006px;width:1px;height:36px;background:#dde1e7"></div>
<div class="abs" style="left:1823px;top:1006px;width:1px;height:36px;background:#dde1e7"></div>
<svg class="abs ti" style="left:1694px;top:1017px;color:#4f4b9c" width="13" height="13" viewBox="0 0 24 24" stroke-width="2"><path d="M15 6l-6 6l6 6"/></svg>
<svg class="abs ti" style="left:1837px;top:1017px;color:#4f4b9c" width="13" height="13" viewBox="0 0 24 24" stroke-width="2"><path d="M9 6l6 6l-6 6"/></svg>
<div class="abs" style="left:1720px;top:1014px;width:36px;text-align:center;font-size:16px;line-height:20px;color:#fff">1</div>
<div class="abs" style="left:1756px;top:1014px;width:33px;text-align:center;font-size:16px;line-height:20px;color:#4f4b9c">2</div>
<div class="abs" style="left:1790px;top:1014px;width:33px;text-align:center;font-size:16px;line-height:20px;color:#4f4b9c">3</div>

</body></html>
